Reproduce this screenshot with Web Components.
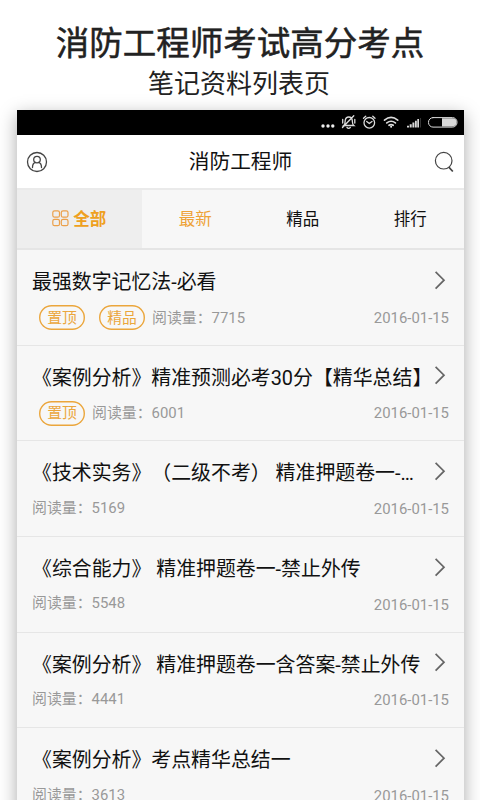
<!DOCTYPE html>
<html lang="zh-CN">
<head>
<meta charset="utf-8">
<title>消防工程师</title>
<style>
html,body{margin:0;height:100%;background:#fff;overflow:hidden}
body{font-family:Roboto,"Noto Sans CJK SC",sans-serif;color:#111;text-spacing-trim:space-all}
</style>
</head>
<body>
<promo-page></promo-page>
<script>
class Base extends HTMLElement {
  connectedCallback() {
    if (this.shadowRoot) return;
    this.attachShadow({mode: 'open'}).innerHTML = this.render();
  }
}

customElements.define('status-bar', class extends Base {
  render() { return `<style>
    :host{display:flex;height:25px;background:#000;justify-content:flex-end}
    svg{display:block}
  </style>
  <svg width="147" height="25" viewBox="317 110 147 25" fill="none" stroke="#dcdcdc" stroke-width="1.3" stroke-linecap="round">
    <g fill="#eee" stroke="none"><circle cx="323" cy="126" r="1.7"/><circle cx="328" cy="126" r="1.7"/><circle cx="332.800" cy="126" r="1.7"/></g>
    <path d="M343.700 125.500c1.600-1.200 1.300-3 1.500-5 .3-2.200 1.700-3.500 3.600-3.500s3.300 1.300 3.500 3.500c.2 2-.1 3.800 1.500 5zM347 127.500q1.600 1.700 3.300 0M342.500 127.500L353.800 115.700M342.700 119.500v3.500M354.800 119.500v3.500"/>
    <circle cx="369.300" cy="122.800" r="5.300"/><path d="M366.700 121.500l2.600 2 2.700-2M363.500 118.300l2.200-2M375 118.300l-2.200-2"/>
    <g stroke-width="1.700"><path d="M384.500 120.100q6.600-5.300 13.200 0M386.800 122.900q4.300-3.300 8.600 0M389 125.300q2.100-1.500 4.200 0"/></g><circle cx="391.100" cy="126.800" r="1" fill="#eee" stroke="none"/>
    <g stroke="none" fill="#d8d8d8"><path d="M407 125.800h2v1.700h-2zM409.700 124.300h2v3.200h-2zM412.400 122.500h2v5h-2zM415 120.800h1.800v6.700H415zM417.300 119h1.700v8.500h-1.700z"/><path fill="#333" d="M420 118h1v9.500h-1z"/></g>
    <rect x="428.500" y="117.600" width="28.500" height="9.500" rx="4.500" stroke-width="1"/>
    <path d="M442 118.300h10.500a4 4 0 0 1 0 8.100H442z" fill="#d8d8d8" stroke="none"/>
  </svg>`; }
});

customElements.define('nav-bar', class extends Base {
  render() { return `<style>
    :host{display:flex;height:53px;align-items:center;justify-content:space-between;padding:0 9px;background:#fff;border-bottom:2px solid #eaeaea;box-sizing:content-box}
    h2{margin:0;font-size:20.7px;line-height:30px;font-weight:400;color:#111}
    svg{display:block}
  </style>
  <svg width="22" height="22" viewBox="26 151 22 22" fill="none" stroke="#444" stroke-width="1.3"><circle cx="37" cy="162" r="9.500"/><circle cx="37" cy="159.600" r="3.300"/><path d="M32.500 167.500c0-2.900 1.600-4.800 3-5.100M41.500 167.500c0-2.900-1.600-4.800-3-5.100" stroke-linecap="round"/></svg>
  <h2><slot></slot></h2>
  <svg width="22" height="22" viewBox="433 151 22 22" fill="none" stroke="#444" stroke-width="1.200"><circle cx="443.700" cy="160.700" r="8.300"/><path d="M448.800 167.200l4 4.300" stroke-width="1.700"/></svg>`; }
});

customElements.define('tab-bar', class extends Base {
  render() { return `<style>
    :host{display:grid;grid-template-columns:124.500px 1fr 1fr 1fr;height:58px;border-bottom:2px solid #e5e5e5;background:#f7f7f7}
  </style><slot></slot>`; }
});

customElements.define('tab-item', class extends Base {
  render() { return `<style>
    :host{display:flex;align-items:center;justify-content:center;gap:4px;font-size:16.500px;line-height:24px;color:#111}
    :host([hot]){color:#eea236}
    :host([selected]){background:#eee;color:#eea020;font-weight:700}
    svg{display:block;margin:0 0 1px}
    span{padding-top:1px}
  </style>${this.hasAttribute('selected') ? `<svg width="17" height="17" viewBox="0 0 17 17" fill="none" stroke="#eba04a" stroke-width="1.200"><rect x=".8" y=".8" width="6.700" height="6.400" rx="1.800"/><rect x="9.300" y=".8" width="6.700" height="6.400" rx="1.800"/><rect x=".8" y="9.300" width="6.700" height="6.400" rx="1.800"/><rect x="9.300" y="9.300" width="6.700" height="6.400" rx="1.800"/></svg>` : ''}<span><slot></slot></span>`; }
});

customElements.define('tag-pill', class extends Base {
  render() { return `<style>
    :host{display:flex;align-items:center;justify-content:center;box-sizing:border-box;width:46px;height:25px;margin:0 7px;border-radius:13px;box-shadow:inset 0 0 0 1.400px #eba63c;font-size:14.800px;line-height:22px;color:#eba63c}
  </style><slot></slot>`; }
});

customElements.define('note-row', class extends Base {
  render() {
    const tags = (this.getAttribute('tags') || '').split(' ').filter(Boolean);
    return `<style>
    :host{display:block;box-sizing:border-box;height:95.700px;padding:16.500px 15px 0 15px;border-bottom:1.500px solid #e6e6e6;background:#f7f7f7}
    .top{display:flex;justify-content:space-between;height:30px}
    h3{margin:1.500px 0 0;font-size:19.900px;line-height:30px;font-weight:400;color:#111;white-space:nowrap}
    svg{display:block;flex:none;margin:3px 3px 0 -10px}
    .meta{display:flex;align-items:center;height:25px;margin-top:8.500px;font-size:14.900px;line-height:22px;color:#999}
    .reads{white-space:nowrap;${tags.length ? '' : 'padding-bottom:2.500px'}}
    time{margin-left:auto}
  </style>
  <div class="top"><h3><slot></slot></h3><svg width="12" height="20" viewBox="0 0 12 20" fill="none" stroke="#666" stroke-width="1.700"><path d="M1.600 1.800L10 10.200 1.600 18.600"/></svg></div>
  <div class="meta">${tags.map(t => `<tag-pill>${t}</tag-pill>`).join('')}<span class="reads">阅读量：${this.getAttribute('reads')}</span><time>2016-01-15</time></div>`; }
});

customElements.define('phone-screen', class extends Base {
  render() { return `<style>
    :host{display:flex;flex-direction:column;width:447px;height:720px;background:#f7f7f7;box-shadow:0 5px 17px rgba(0,0,0,.34)}
    ::slotted(*){flex:none}
  </style><slot></slot>`; }
});

customElements.define('promo-page', class extends Base {
  render() { return `<style>
    :host{display:flex;flex-direction:column;height:800px;overflow:hidden}
    header{flex:none;height:110px;box-sizing:border-box;padding-top:24px;text-align:center;color:#222}
    h1{margin:0;font-size:33.500px;line-height:40px;font-weight:400;-webkit-text-stroke:.5px #222}
    p{margin:2px 0 0;font-size:26px;line-height:36px;padding-right:2px}
    phone-screen{margin-left:17px;flex:none}
  </style>
  <header><h1>消防工程师考试高分考点</h1><p>笔记资料列表页</p></header>
  <phone-screen>
    <status-bar></status-bar>
    <nav-bar>消防工程师</nav-bar>
    <tab-bar><tab-item selected>全部</tab-item><tab-item hot>最新</tab-item><tab-item>精品</tab-item><tab-item>排行</tab-item></tab-bar>
    <note-row tags="置顶 精品" reads="7715">最强数字记忆法-必看</note-row>
    <note-row tags="置顶" reads="6001">《案例分析》精准预测必考30分【精华总结】</note-row>
    <note-row reads="5169">《技术实务》（二级不考） 精准押题卷一-…</note-row>
    <note-row reads="5548">《综合能力》 精准押题卷一-禁止外传</note-row>
    <note-row reads="4441">《案例分析》 精准押题卷一含答案-禁止外传</note-row>
    <note-row reads="3613">《案例分析》考点精华总结一</note-row>
  </phone-screen>`; }
});
</script>
</body>
</html>
